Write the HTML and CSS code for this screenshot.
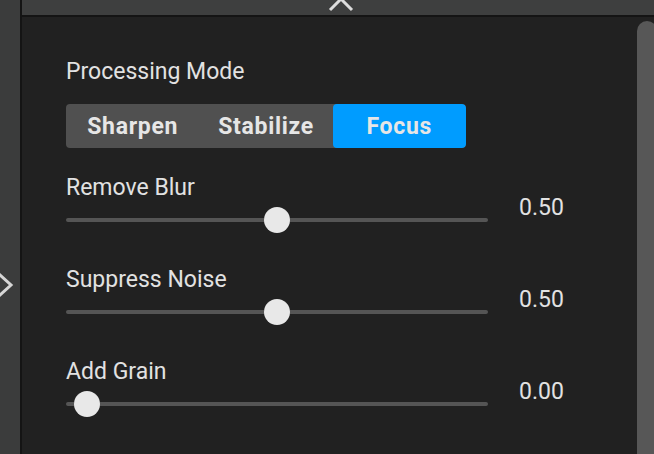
FILE: index.html
```html
<!DOCTYPE html>
<html lang="en">
<head>
    <meta charset="UTF-8">
    <title>Processing Settings</title>
    <link rel="stylesheet" href="styles.css">
</head>
<body>

<aside class="side">
    <svg class="side-toggle" width="20" height="30" viewBox="0 0 20 30">
        <path d="M-1 4 L11 15 L-1 26" fill="none" stroke="#d6d6d6" stroke-width="3"/>
    </svg>
</aside>

<div class="main">
    <div class="topbar">
        <svg class="collapse" width="30" height="15" viewBox="0 0 30 15">
            <path d="M4 10 L15 -1 L26 10" fill="none" stroke="#dcdcdc" stroke-width="3"/>
        </svg>
    </div>

    <div class="panel">
        <div class="content">
            <div class="section-label">Processing Mode</div>
            <div class="segmented">
                <button class="segment">Sharpen</button>
                <button class="segment">Stabilize</button>
                <button class="segment active">Focus</button>
            </div>

            <div class="setting">
                <div class="setting-control">
                    <div class="setting-label">Remove Blur</div>
                    <div class="slider">
                        <div class="slider-track"></div>
                        <div class="slider-thumb" style="--value: 0.5"></div>
                    </div>
                </div>
                <div class="setting-value">0.50</div>
            </div>

            <div class="setting">
                <div class="setting-control">
                    <div class="setting-label">Suppress Noise</div>
                    <div class="slider">
                        <div class="slider-track"></div>
                        <div class="slider-thumb" style="--value: 0.5"></div>
                    </div>
                </div>
                <div class="setting-value">0.50</div>
            </div>

            <div class="setting">
                <div class="setting-control">
                    <div class="setting-label">Add Grain</div>
                    <div class="slider">
                        <div class="slider-track"></div>
                        <div class="slider-thumb" style="--value: 0"></div>
                    </div>
                </div>
                <div class="setting-value">0.00</div>
            </div>
        </div>
        <div class="scrollbar"></div>
    </div>
</div>

</body>
</html>
```

FILE: styles.css
```css
/* Global Styles */
* {
    box-sizing: border-box;
    margin: 0;
    padding: 0;
    font-family: 'Roboto', sans-serif;
}
body {
    display: flex;
    height: 454px;
    overflow: hidden;
    background-color: #212121;
    color: #e2e2e2;
}

/* Left collapsed sidebar */
.side {
    width: 22px;
    flex-shrink: 0;
    background-color: #3b3c3c;
    border-right: 2px solid #141414;
    padding-top: 270px;
}
.side-toggle {
    display: block;
}

/* Main area */
.main {
    flex: 1;
    display: flex;
    flex-direction: column;
    min-width: 0;
}
.topbar {
    height: 17px;
    flex-shrink: 0;
    background-color: #3e3f3f;
    border-bottom: 2px solid #141414;
    display: flex;
    justify-content: center;
    overflow: hidden;
}
.collapse {
    display: block;
    margin-left: 6px;
}
.panel {
    flex: 1;
    display: flex;
    background-color: #212121;
}
.content {
    flex: 1;
    padding: 42px 0 0 44px;
}
.scrollbar {
    width: 20px;
    margin: 4px -3px 0 0;
    background-color: #575757;
    border-radius: 10px 10px 0 0;
}

/* Processing mode */
.section-label {
    font-size: 23px;
    line-height: 26px;
}
.segmented {
    display: flex;
    width: 400px;
    height: 44px;
    margin-top: 19px;
    background-color: #505050;
    border-radius: 4px;
    overflow: hidden;
}
.segment {
    flex: 1;
    border: none;
    background: none;
    color: #e6e6e6;
    font-size: 23px;
    font-weight: 700;
    letter-spacing: 0.7px;
    border-radius: 4px;
    cursor: pointer;
}
.segment.active {
    background-color: #009cff;
}

/* Slider rows */
.setting {
    display: flex;
    margin-top: 27px;
}
.setting + .setting {
    margin-top: 34px;
}
.setting-control {
    width: 422px;
}
.setting-label {
    font-size: 23px;
    line-height: 26px;
    margin-bottom: 6px;
}
.setting-value {
    margin-left: 31px;
    padding-top: 20px;
    font-size: 23px;
    line-height: 26px;
}
.slider {
    position: relative;
    height: 26px;
    display: flex;
    align-items: center;
}
.slider-track {
    width: 100%;
    height: 4px;
    border-radius: 2px;
    background-color: #555;
}
.slider-thumb {
    position: absolute;
    top: 0;
    left: calc(8px + var(--value) * (100% - 42px));
    width: 26px;
    height: 26px;
    border-radius: 50%;
    background-color: #e8e8e8;
}
```
